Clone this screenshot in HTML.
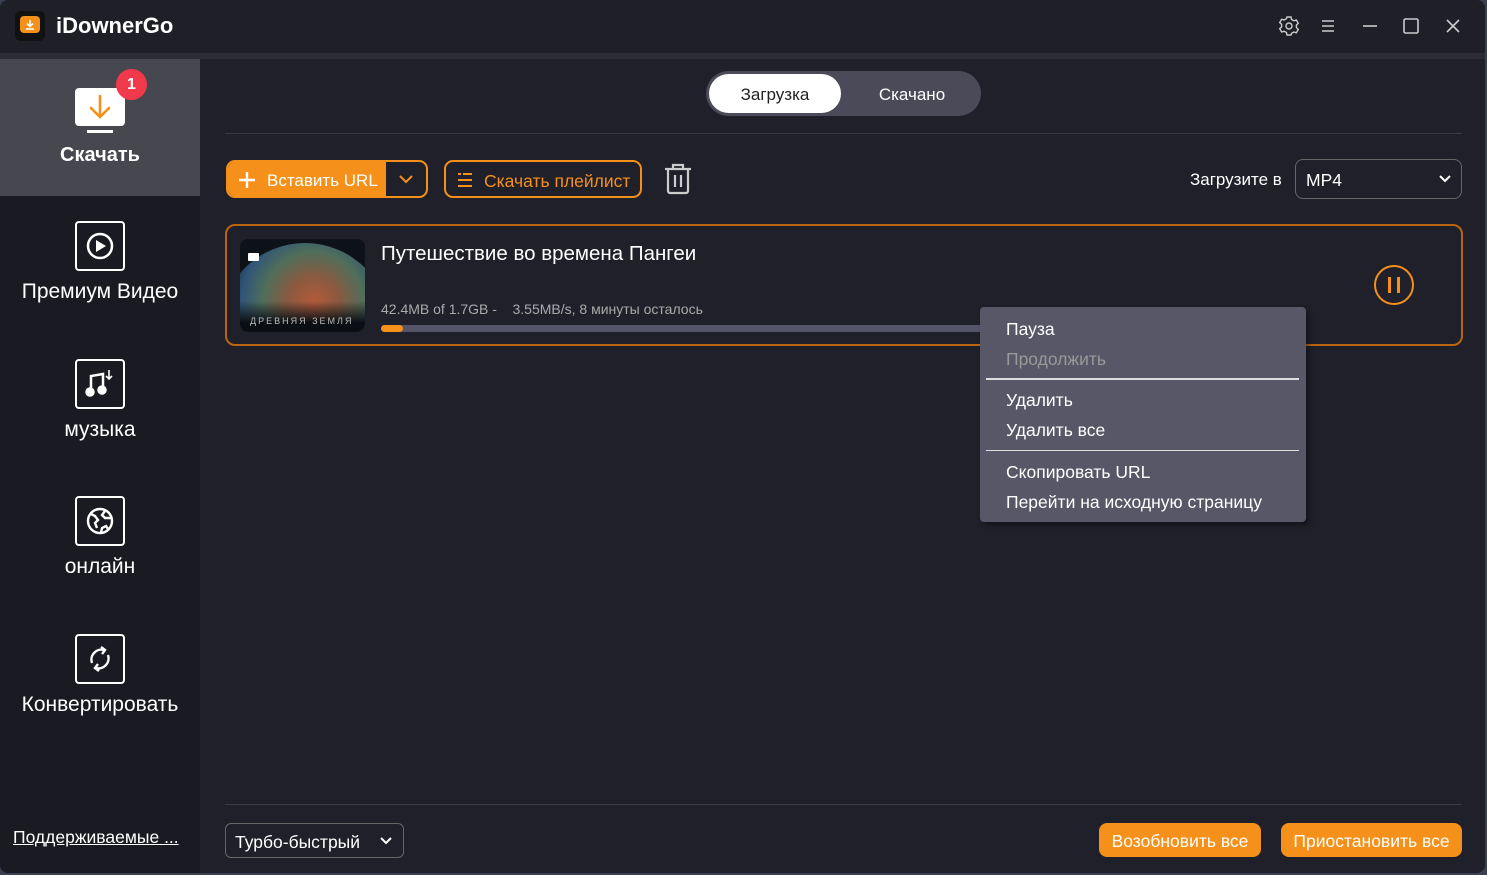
<!DOCTYPE html>
<html><head><meta charset="utf-8"><style>
*{box-sizing:border-box;margin:0;padding:0}
body{width:1487px;height:875px;background:#3a4050;font-family:"Liberation Sans","Noto Sans CJK SC",sans-serif;overflow:hidden;position:relative;color:#fff}
.win{position:absolute;left:0;top:0;width:1485px;height:873px;background:#1f2029;border-radius:8px;overflow:hidden}
.title{position:absolute;left:0;top:0;width:100%;height:53px;background:#1e1f27}
.band{position:absolute;left:0;top:53px;width:100%;height:6px;background:#2b2c35}
.side{position:absolute;left:0;top:59px;width:200px;bottom:0;background:#1a1b22}
.act{position:absolute;left:0;top:0;width:200px;height:137px;background:#46474f}
.item{position:absolute;left:0;width:200px;text-align:center;font-size:21px}
.ibox{position:absolute;left:75px;width:50px;height:50px;border:2.5px solid #fff;border-radius:4px}
.abs{position:absolute}
.menu div{position:absolute;left:26px;font-size:17.5px;color:#fff}
</style></head><body>
<div class="win">
<div class="title">
 <div class="abs" style="left:15px;top:11px;width:30px;height:30px;background:#111;border-radius:6px"></div>
 <div class="abs" style="left:20px;top:16px;width:20px;height:17px;background:#f5901a;border-radius:4px"></div>
 <svg class="abs" style="left:20px;top:16px" width="20" height="17"><path d="M10 4v6M7 7.5l3 3 3-3M6 13h8" stroke="#fff" stroke-width="1.6" fill="none"/></svg>
 <div class="abs" style="left:56px;top:13px;font-size:22px;font-weight:bold">iDownerGo</div>
 <svg class="abs" style="left:1278px;top:15px" width="22" height="22" viewBox="0 0 22 22" fill="none" stroke="#ccc" stroke-width="1.4"><path d="M9 2h4l.6 2.5 2.3 1.3 2.4-.8 2 3.4-1.9 1.7v2.6l1.9 1.7-2 3.4-2.4-.8-2.3 1.3L13 20H9l-.6-2.5-2.3-1.3-2.4.8-2-3.4 1.9-1.7V9.3L1.7 7.6l2-3.4 2.4.8 2.3-1.3z"/><circle cx="11" cy="11" r="3"/></svg>
 <svg class="abs" style="left:1320px;top:18px" width="16" height="16" stroke="#ccc" stroke-width="1.6"><path d="M2 3h12M2 8h12M2 13h12"/></svg>
 <svg class="abs" style="left:1361px;top:18px" width="18" height="16" stroke="#ccc" stroke-width="1.6"><path d="M2 8h14"/></svg>
 <svg class="abs" style="left:1402px;top:17px" width="18" height="18" stroke="#ccc" stroke-width="1.6" fill="none"><rect x="2" y="2" width="14" height="14" rx="1.5"/></svg>
 <svg class="abs" style="left:1444px;top:17px" width="18" height="18" stroke="#ccc" stroke-width="1.6"><path d="M3 3l12 12M15 3L3 15"/></svg>
</div>
<div class="band"></div>
<div class="side">
 <div class="act"></div>
 <div class="abs" style="left:75px;top:29px;width:50px;height:38px;background:#fff;border-radius:4px"></div>
 <div class="abs" style="left:87px;top:71px;width:26px;height:3px;background:#fff"></div>
 <svg class="abs" style="left:85px;top:33px" width="30" height="30" fill="none" stroke="#f5901a" stroke-width="2.6" stroke-linecap="round"><path d="M15 4v20M6 16l9 9 9-9"/></svg>
 <div class="abs" style="left:116px;top:10px;width:31px;height:31px;border-radius:50%;background:#f0394a;text-align:center;line-height:31px;font-size:16px;font-weight:bold">1</div>
 <div class="item" style="top:85px;font-weight:bold;font-size:20px">Скачать</div>

 <div class="ibox" style="top:162px"></div>
 <svg class="abs" style="left:83px;top:170px" width="34" height="34" fill="none" stroke="#fff" stroke-width="2.5"><circle cx="17" cy="17" r="12"/><path d="M13 11v12l10-6z" fill="#fff" stroke="none"/></svg>
 <div class="item" style="top:221px">Премиум Видео</div>

 <div class="ibox" style="top:300px"></div>
 <svg class="abs" style="left:83px;top:308px" width="34" height="34" fill="#fff" stroke="#fff" stroke-width="2.5"><path d="M8 25V9l12-2v16" fill="none"/><circle cx="7" cy="25" r="3.5"/><circle cx="19" cy="23" r="3.5"/><path d="M26 3v9M23 9l3 3 3-3" fill="none" stroke-width="1.6"/></svg>
 <div class="item" style="top:359px">музыка</div>

 <div class="ibox" style="top:437px"></div>
 <svg class="abs" style="left:83px;top:445px" width="34" height="34" fill="none" stroke="#fff" stroke-width="2.4"><circle cx="17" cy="17" r="12"/><path d="M8 10l4 2 3 4-3 3 2 5M22 7l-3 4 3 3h6M18 29l1-5 4-2 2 3"/></svg>
 <div class="item" style="top:496px">онлайн</div>

 <div class="ibox" style="top:575px"></div>
 <svg class="abs" style="left:83px;top:583px" width="34" height="34" fill="none" stroke="#fff" stroke-width="2.4"><path d="M9 21a10 10 0 0 1 12-13M25 13a10 10 0 0 1-12 13M18 5l4 3-3 4M16 29l-4-3 3-4"/></svg>
 <div class="item" style="top:634px">Конвертировать</div>

 <div class="abs" style="left:13px;top:768px;font-size:17.5px;text-decoration:underline">Поддерживаемые ...</div>
</div>

<!-- tabs -->
<div class="abs" style="left:706px;top:71px;width:275px;height:45px;border-radius:23px;background:#4a4a58"></div>
<div class="abs" style="left:709px;top:74px;width:132px;height:39px;border-radius:20px;background:#fff;color:#222;font-size:17px;text-align:center;line-height:41px">Загрузка</div>
<div class="abs" style="left:850px;top:74px;width:124px;height:39px;font-size:17px;text-align:center;line-height:41px">Скачано</div>
<div class="abs" style="left:225px;top:133px;width:1237px;height:1px;background:#3a3b45"></div>

<!-- toolbar -->
<div class="abs" style="left:226px;top:160px;width:202px;height:38px;border:2px solid #f5901a;border-radius:9px;overflow:hidden">
 <div class="abs" style="left:0;top:0;width:158px;height:36px;background:#f5901a"></div>
 <svg class="abs" style="left:10px;top:9px" width="18" height="18" stroke="#fff" stroke-width="2.4"><path d="M9 1v16M1 9h16"/></svg>
 <div class="abs" style="left:39px;top:9px;font-size:17px">Вставить URL</div>
 <svg class="abs" style="left:170px;top:10px" width="16" height="14" stroke="#f5901a" stroke-width="2" fill="none"><path d="M2 4l6 6 6-6"/></svg>
</div>
<div class="abs" style="left:444px;top:160px;width:198px;height:38px;border:2px solid #f5901a;border-radius:9px">
 <svg class="abs" style="left:10px;top:9px" width="18" height="18" stroke="#f5901a" stroke-width="2"><path d="M2 3h3M7 3h9M2 9h14M2 15h14"/></svg>
 <div class="abs" style="left:38px;top:9px;font-size:17.5px;color:#f5901a">Скачать плейлист</div>
</div>
<svg class="abs" style="left:663px;top:163px" width="30" height="32" fill="none" stroke="#ccc" stroke-width="2.2"><path d="M2 6h26M10 6V2h10v4M5 6v22a2 2 0 0 0 2 2h16a2 2 0 0 0 2-2V6M12 12v12M18 12v12"/></svg>
<div class="abs" style="left:1190px;top:170px;font-size:17px">Загрузите в</div>
<div class="abs" style="left:1295px;top:159px;width:167px;height:40px;border:1px solid #666;border-radius:8px">
 <div class="abs" style="left:10px;top:10px;font-size:17.5px">MP4</div>
 <svg class="abs" style="left:142px;top:13px" width="14" height="12" stroke="#fff" stroke-width="2" fill="none"><path d="M2 3l5 5 5-5"/></svg>
</div>

<!-- item -->
<div class="abs" style="left:225px;top:224px;width:1238px;height:122px;border:2px solid #b9650f;border-radius:10px">
 <div class="abs" style="left:13px;top:13px;width:125px;height:93px;border-radius:8px;overflow:hidden;background:#0d1218">
  <div class="abs" style="left:-20px;top:4px;width:170px;height:170px;border-radius:50%;background:radial-gradient(circle at 55% 35%,#b55a3a 0,#8a5a40 18%,#4f6e5a 35%,#2f5478 50%,#1a2a3a 62%)"></div>
  <div class="abs" style="left:0;top:62px;width:125px;height:31px;background:linear-gradient(transparent,#0b0f14 70%)"></div>
  <div class="abs" style="left:10px;top:77px;font-size:9px;letter-spacing:2px;color:#bbb">ДРЕВНЯЯ ЗЕМЛЯ</div>
  <div class="abs" style="left:8px;top:14px;width:11px;height:8px;background:#fff;border-radius:1px"></div>
 </div>
 <div class="abs" style="left:154px;top:16px;font-size:20.5px">Путешествие во времена Пангеи</div>
 <div class="abs" style="left:154px;top:75px;font-size:14px;color:#aaa">42.4MB of 1.7GB -&nbsp;&nbsp;&nbsp; 3.55MB/s, 8 минуты осталось</div>
 <div class="abs" style="left:154px;top:99px;width:620px;height:7px;border-radius:4px;background:#55556a"></div>
 <div class="abs" style="left:154px;top:99px;width:22px;height:7px;border-radius:4px;background:#f5901a"></div>
 <div class="abs" style="left:1147px;top:39px;width:40px;height:40px;border:2.5px solid #f5901a;border-radius:50%"></div>
 <div class="abs" style="left:1161px;top:51px;width:3px;height:16px;background:#f5901a"></div>
 <div class="abs" style="left:1170px;top:51px;width:3px;height:16px;background:#f5901a"></div>
</div>

<!-- context menu -->
<div class="abs menu" style="left:980px;top:307px;width:326px;height:215px;background:#575768;border-radius:4px;box-shadow:3px 3px 6px rgba(0,0,0,.4)">
 <div style="top:12px">Пауза</div>
 <div style="top:42px;color:#999">Продолжить</div>
 <span class="abs" style="left:6px;top:71px;width:313px;height:2px;background:#ddd"></span>
 <div style="top:83px">Удалить</div>
 <div style="top:113px">Удалить все</div>
 <span class="abs" style="left:6px;top:143px;width:313px;height:1px;background:#ddd"></span>
 <div style="top:155px">Скопировать URL</div>
 <div style="top:185px">Перейти на исходную страницу</div>
</div>

<!-- bottom -->
<div class="abs" style="left:225px;top:804px;width:1237px;height:1px;background:#3a3b45"></div>
<div class="abs" style="left:225px;top:823px;width:179px;height:35px;border:1px solid #666;border-radius:6px">
 <div class="abs" style="left:9px;top:8px;font-size:17.5px">Турбо-быстрый</div>
 <svg class="abs" style="left:153px;top:11px" width="14" height="12" stroke="#fff" stroke-width="2" fill="none"><path d="M2 3l5 5 5-5"/></svg>
</div>
<div class="abs" style="left:1099px;top:823px;width:162px;height:34px;background:#f5901a;border-radius:8px;font-size:17.5px;text-align:center;line-height:36px">Возобновить все</div>
<div class="abs" style="left:1281px;top:823px;width:181px;height:34px;background:#f5901a;border-radius:8px;font-size:17.5px;text-align:center;line-height:36px">Приостановить все</div>
</div>
</body></html>
